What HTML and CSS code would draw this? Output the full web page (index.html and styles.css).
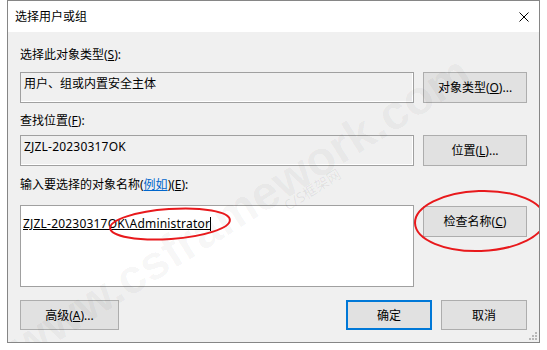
FILE: index.html
```html
<!DOCTYPE html>
<html lang="zh-CN">
<head>
  <meta charset="UTF-8" />
  <title>选择用户或组</title>
  <link rel="stylesheet" href="styles.css">
</head>
<body>
  <div class="dialog">
    <div class="titlebar">
      <span class="title">选择用户或组</span>
      <svg class="close" width="10" height="10" viewBox="0 0 10 10">
        <path d="M0.5 0.5 L9.5 9.5 M9.5 0.5 L0.5 9.5" stroke="#000" stroke-width="1" fill="none" />
      </svg>
    </div>

    <div class="content">
      <div class="label">选择此对象类型(<u>S</u>):</div>
      <div class="row row-first">
        <div class="field">用户、组或内置安全主体</div>
        <button class="btn">对象类型(<u>O</u>)...</button>
      </div>

      <div class="label label-second">查找位置(<u>F</u>):</div>
      <div class="row row-second">
        <div class="field latin">ZJZL-20230317OK</div>
        <button class="btn">位置(<u>L</u>)...</button>
      </div>

      <div class="label label-third">输入要选择的对象名称(<a class="link">例如</a>)(<u>E</u>):</div>
      <div class="row row-names">
        <div class="names latin">
          <span class="resolved">ZJZL-20230317OK\Administrator</span><span class="caret"></span>
        </div>
        <button class="btn btn-check">检查名称(<u>C</u>)</button>
      </div>

      <div class="footer">
        <button class="btn btn-advanced">高级(<u>A</u>)...</button>
        <div class="footer-right">
          <button class="btn btn-small btn-default">确定</button>
          <button class="btn btn-small">取消</button>
        </div>
      </div>
    </div>

    <div class="watermark">www.csframework.com</div>
    <div class="watermark-sub">C/S框架网</div>

    <svg class="marks" width="533" height="343" viewBox="0 0 533 343">
      <ellipse cx="163" cy="224" rx="60" ry="15" transform="rotate(-4 163 224)" fill="none" stroke="#e8191c" stroke-width="2" />
      <ellipse cx="473" cy="221" rx="65" ry="30" transform="rotate(-2 473 221)" fill="none" stroke="#e8191c" stroke-width="2" />
    </svg>

    <svg class="grip" width="8" height="8" viewBox="0 0 8 8">
      <rect x="6" y="0" width="2" height="2" fill="#b8b8b8" />
      <rect x="3" y="3" width="2" height="2" fill="#b8b8b8" />
      <rect x="6" y="3" width="2" height="2" fill="#b8b8b8" />
      <rect x="0" y="6" width="2" height="2" fill="#b8b8b8" />
      <rect x="3" y="6" width="2" height="2" fill="#b8b8b8" />
      <rect x="6" y="6" width="2" height="2" fill="#b8b8b8" />
    </svg>
  </div>
</body>
</html>
```

FILE: styles.css
```css
body {
  margin: 0;
  background-color: white;
  font-family: "Noto Sans", "Noto Sans CJK SC", sans-serif;
  font-size: 12px;
  color: #000;
}
.dialog {
  position: relative;
  margin-left: 7px;
  width: 533px;
  height: 343px;
  box-sizing: border-box;
  border: 1px solid #868686;
  background-color: #f0f0f0;
  overflow: hidden;
}
.titlebar {
  height: 31px;
  background-color: white;
  display: flex;
  align-items: center;
  justify-content: space-between;
  padding: 0 10px 0 7px;
}
.title {
  line-height: 17px;
}
.content {
  padding: 14px 12px 12px 12px;
}
.label {
  height: 17px;
  line-height: 17px;
}
.label-second {
  margin-top: 9px;
}
.label-third {
  margin-top: 10px;
}
.link {
  color: #0066cc;
  text-decoration: underline;
}
.row {
  display: grid;
  grid-template-columns: 394px 104px;
  column-gap: 9px;
  align-items: start;
}
.row-first {
  margin-top: 9px;
}
.row-second {
  margin-top: 6px;
}
.row-names {
  margin-top: 12px;
}
.field {
  height: 31px;
  box-sizing: border-box;
  border: 1px solid #a0a0a0;
  box-shadow: inset -1px -1px 0 white;
  padding: 2px 3px 0 3px;
  line-height: 17px;
}
.latin {
  letter-spacing: 0.2px;
}
.names {
  height: 82px;
  box-sizing: border-box;
  border: 1px solid #a0a0a0;
  background-color: white;
  padding: 9px 2px 0 2px;
  line-height: 17px;
  white-space: nowrap;
}
.resolved {
  text-decoration: underline;
}
.caret {
  display: inline-block;
  width: 1px;
  height: 14px;
  background-color: #000;
  vertical-align: -3px;
}
.btn {
  height: 31px;
  box-sizing: border-box;
  border: 1px solid #adadad;
  background-color: #e1e1e1;
  font-family: inherit;
  font-size: 12px;
  color: #000;
  padding: 0;
  line-height: 17px;
}
.btn-check {
  margin-top: 1px;
}
.footer {
  margin-top: 13px;
  display: flex;
  justify-content: space-between;
}
.footer .btn {
  height: 30px;
}
.btn-advanced {
  width: 99px;
}
.footer-right {
  display: flex;
  gap: 9px;
}
.btn-small {
  width: 86px;
}
.btn-default {
  border: 2px solid #0078d7;
}
.watermark {
  position: absolute;
  left: -48px;
  top: 180px;
  width: 560px;
  text-align: center;
  font-family: "Liberation Sans", sans-serif;
  font-weight: bold;
  font-size: 48px;
  white-space: nowrap;
  color: rgba(0, 0, 0, 0.04);
  transform: rotate(-32deg);
  pointer-events: none;
}
.watermark-sub {
  position: absolute;
  left: 272px;
  top: 178px;
  font-size: 14px;
  color: rgba(0, 0, 0, 0.07);
  transform: rotate(-32deg);
}
.marks {
  position: absolute;
  left: -1px;
  top: -1px;
}
.grip {
  position: absolute;
  right: 2px;
  bottom: 2px;
}
```
